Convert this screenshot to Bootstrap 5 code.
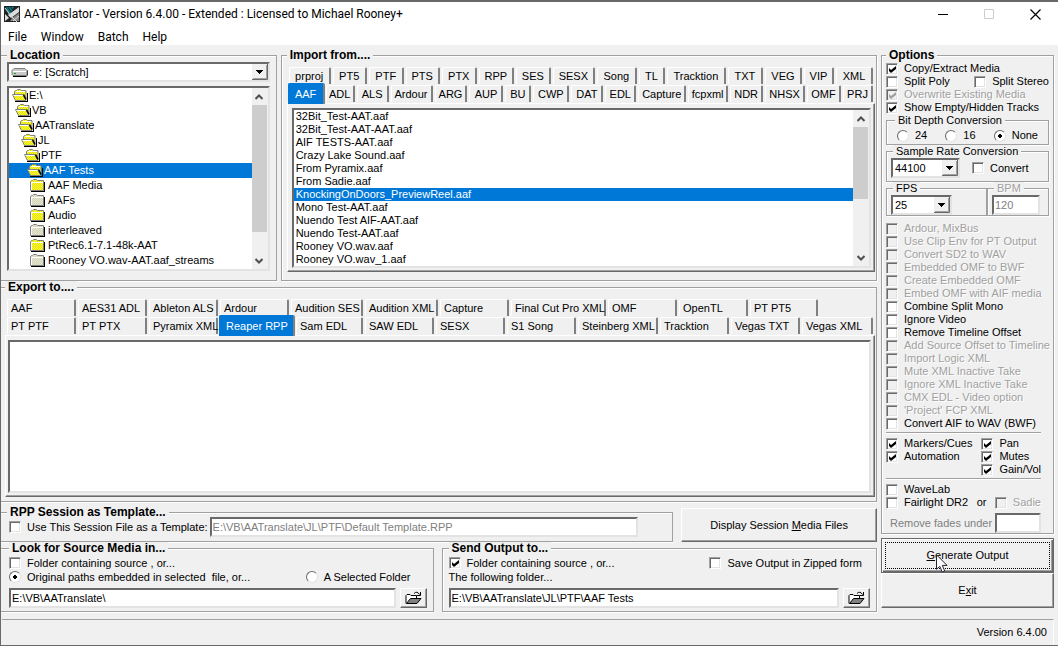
<!DOCTYPE html>
<html lang="en">
<head>
<meta charset="utf-8">
<meta name="viewport" content="width=device-width, initial-scale=1">
<title>AATranslator</title>
<link href="https://cdn.jsdelivr.net/npm/bootstrap@5.3.0/dist/css/bootstrap.min.css" rel="stylesheet">
<style>
:root{--face:#f0f0f0;--dk:#696969;--md:#a0a0a0;--lt:#e3e3e3;--sel:#0078d7}
body{min-height:100vh;background:var(--face);color:#000;font:11px/13px "Liberation Sans",Arial,sans-serif;border:1px solid var(--dk);border-width:2px 0 1px 1px;overflow:hidden}
button,input,select{font:inherit;color:inherit}
svg{display:block;flex:none}
.titlebar{height:26px;padding:0 0 2px 3px;font:12px/20px Roboto,"Open Sans",sans-serif}
.capbtn{width:46px;height:24px;border:0;background:none;display:grid;place-items:center}
.menubar{height:17px;font:12px/18px Roboto,"Open Sans",sans-serif}
.menubar .nav-link{color:#000;padding:0 7px}
.work{display:grid;grid-template-columns:minmax(0,1fr) 173px;column-gap:4px;padding-right:4px}
.toprow{display:grid;grid-template-columns:276fr 597fr;column-gap:4px;margin-top:4px}
.botrow{display:grid;grid-template-columns:433fr 436fr;column-gap:8px}
.tplrow{display:grid;grid-template-columns:673fr 196fr;column-gap:8px}
.tplrow>button{margin-top:6px}
.etched{border:1px solid var(--md);box-shadow:1px 1px 0 #fff,inset 1px 1px 0 #fff;padding:0 6px;position:relative;min-width:0}
.etched>legend{float:none;width:auto;margin:0 0 0 2px;padding:0 3px;background:var(--face);font-size:11px;line-height:13px}
.etched>legend.main{font-size:12px;font-weight:700;margin-left:0}
.openleft{border-left:0;box-shadow:0 1px 0 #fff,inset 0 1px 0 #fff}
.tabsbox{padding:0 1px 8px 5px}
.tabsbox.openleft{padding:0 1px 4px 4px}
.tabsbox .strip{padding:5px 0 0 2px}
.sunken{background:#fff;border:2px solid;border-color:var(--dk) var(--lt) var(--lt) var(--dk);border-radius:0;outline:0}
.raised{background:var(--face);border:1px solid;border-color:#fff var(--dk) var(--dk) #fff;box-shadow:inset -1px -1px 0 var(--md);border-radius:0}
.drop{appearance:none;height:20px;padding:0 18px 0 2px;line-height:16px;background:#fff url("data:image/svg+xml,%3Csvg xmlns='http://www.w3.org/2000/svg' width='16' height='16'%3E%3Cpath fill='%23f0f0f0' d='M0 0h16v16H0z'/%3E%3Cpath fill='none' stroke='%23696969' d='M0 15.500h15.500V0'/%3E%3Cpath fill='none' stroke='%23a0a0a0' d='M1 14.500h13.500V1'/%3E%3Cpath d='M4 6h7v1h-1v1H9v1H8v1H7V9H6V8H5V7H4z'/%3E%3C/svg%3E") right center no-repeat}
.rate{width:69px}.fps{width:61px}.fpsbox{width:101px}.bpm{width:62px}.fades{flex:none}
.field.bpmfield{width:48px}.field.fades{width:46px}
.tick,.dot{appearance:none;flex:none;margin:0;width:12px;height:12px}
.tick{background:#fff center no-repeat;border:1px solid;border-color:var(--md) #fff #fff var(--md);box-shadow:inset 1px 1px 0 var(--dk),inset -1px -1px 0 var(--lt)}
.tick:disabled{background-color:var(--face)}
.tick:checked{background-image:url("data:image/svg+xml,%3Csvg xmlns='http://www.w3.org/2000/svg' width='8' height='8'%3E%3Cpath d='M1 3v3l2 2 5-4V1L3 5z'/%3E%3C/svg%3E")}
.tick:checked:disabled{background-image:url("data:image/svg+xml,%3Csvg xmlns='http://www.w3.org/2000/svg' width='8' height='8'%3E%3Cpath fill='%23a0a0a0' d='M1 3v3l2 2 5-4V1L3 5z'/%3E%3C/svg%3E")}
.dot{border-radius:50%;background:#fff;border:1px solid;border-color:var(--dk) var(--lt) var(--lt) var(--dk)}
.dot:checked{background:radial-gradient(circle,#000 0 2px,#fff 2px)}
.opt{display:flex;align-items:center;height:13px;gap:6px;white-space:nowrap}
.off{color:var(--md);text-shadow:1px 1px 0 #fff}
.dim{color:#808080}
.rule{height:2px;margin:2px 8px 3px 0;border:0;border-top:1px solid var(--md);border-bottom:1px solid #fff;opacity:1}
.checks{padding-top:6px}
.botrow fieldset{padding-left:8px;padding-top:1px;padding-bottom:3px}
.botrow fieldset+fieldset{padding-left:6px}
.botrow .opt,.botrow .note{height:14px;line-height:14px}
.tplline{margin-top:-2px;padding-bottom:4px;padding-left:2px}
.field.tplfield{margin:0 28px 0 2px}
.bits{padding:2px 4px}
.raterow{padding-bottom:3px}
.tabrow{display:grid;height:18px}
.tabrow button{border:0;background:none;border-left:1px solid #fff;border-top:1px solid #fff;border-right:2px solid #808080;border-radius:2px 2px 0 0;padding:0;margin:0 2px 1px 0;line-height:15px;white-space:nowrap;min-width:0}
.tabrow button.active{background:var(--sel);color:#fff;border-color:var(--sel) #808080 var(--sel) var(--sel);margin:-2px 1px -1px -1px;z-index:1}
.imp1{grid-template-columns:44fr 36fr 37fr 36fr 37fr 37fr 37fr 44fr 42fr 28fr 61fr 37fr 39fr 32fr 39fr}
.imp2{grid-template-columns:37fr 31fr 34fr 44fr 35fr 36fr 28fr 38fr 34fr 33fr 50fr 42fr 35fr 42fr 36fr 32fr}
.exp1{grid-template-columns:71fr 71fr 71fr 71fr 74fr 75fr 71fr 97fr 71fr 71fr 70fr 55fr}
.exp2{grid-template-columns:71fr 71fr 71fr 76fr 69fr 71fr 71fr 71fr 82fr 71fr 71fr 73fr}
.exp1 button,.exp2 button{text-align:left;padding-left:3px}
.exp2 button.active{padding-left:6px}
.page{border:1px solid;border-color:#fff var(--dk) var(--dk) #fff;box-shadow:inset -1px -1px 0 var(--md);padding:4px 3px 3px 4px}
.export .page{padding-left:2px}
.pick{list-style:none;margin:0;padding:0;flex:1;min-width:0;overflow:hidden}
.pick li{white-space:nowrap}
.pick .chosen{background:var(--sel);color:#fff}
.files li{height:13px;line-height:13px;padding-left:2px}
.tree{height:181px}
.tree li{height:15px;line-height:15px;display:flex;align-items:center;gap:1px}
.d0{padding-left:3px}.d1{padding-left:6px}.d2{padding-left:9px}.d3{padding-left:12px}.d4{padding-left:15px}.d5{padding-left:18px}.d6{padding-left:21px}
.tree .d6{gap:3px}
.sbar{width:16px;display:flex;flex-direction:column;background:var(--face);padding-right:1px}
.sbar button{height:17px;border:0;padding:0;background:none;display:grid;place-items:center}
.thumb{background:#cdcdcd}
.field{height:20px;padding:0 1px;width:100%;min-width:0;line-height:16px}
.big{padding:0;text-align:center}
.default{border:1px solid var(--dk);box-shadow:inset 1px 1px 0 #fff,inset -1px -1px 0 var(--dk),inset -2px -2px 0 var(--md);position:relative}
.action{height:35px}
.default .focusbox{position:absolute;inset:3px;border:1px dotted #000}
.pointer{position:absolute;left:54px;top:15px}
.statusbar{height:26px;margin:7px 4px 0 1px;padding-right:6px;border-top:1px solid var(--md);border-right:1px solid #fff}
</style>
</head>
<body class="d-flex flex-column">
<svg width="0" height="0" class="position-absolute">
<defs>
<pattern id="dither" width="2" height="2" patternUnits="userSpaceOnUse"><path fill="#ff0" d="M0 0h2v2H0z"/><path fill="#e0dc40" d="M1 0h1v1H1zM0 1h1v1H0z"/></pattern>
<pattern id="ditherg" width="2" height="2" patternUnits="userSpaceOnUse"><path fill="#e8e8b8" d="M0 0h2v2H0z"/><path fill="#d0d0d0" d="M1 0h1v1H1zM0 1h1v1H0z"/></pattern>
<symbol id="fopen" viewBox="0 0 16 13"><path d="M3 12h12V4h1v9H3z"/><path fill="url(#dither)" stroke="#808080" d="M2.500 5V2.500l1-1h1l1-1h3l1 1h4.500v9"/><path fill="url(#dither)" stroke="#808080" d="M.5 5.500h10l3.500 6H3.500z"/><path fill="none" stroke="#fff" d="M1.500 6.500h9M4 2.500h9"/><path fill="none" stroke="#000" stroke-width="1.500" d="M11.500 5.500l2.500 5"/></symbol>
<symbol id="fclosed" viewBox="0 0 15 13"><path d="M1 12h13V3h1v10H1z"/><path fill="url(#dither)" stroke="#808080" d="M.5 11.500v-9l1-1h1l1-1h3l1 1h6v10z"/><path fill="none" stroke="#fff" d="M1.500 11V3.500H13"/></symbol>
<symbol id="fgray" viewBox="0 0 15 13"><path d="M1 12h13V3h1v10H1z"/><path fill="url(#ditherg)" stroke="#808080" d="M.5 11.500v-9l1-1h1l1-1h3l1 1h6v10z"/><path fill="none" stroke="#fff" d="M1.500 11V3.500H13"/></symbol>
<symbol id="up" viewBox="0 0 8 6"><path fill="none" stroke="#505050" stroke-width="2" d="M.5 5L4 1.500 7.500 5"/></symbol>
<symbol id="down" viewBox="0 0 8 6"><path fill="none" stroke="#505050" stroke-width="2" d="M.5 1L4 4.500 7.500 1"/></symbol>
<symbol id="browse" viewBox="0 0 17 14"><path fill="#fff" stroke="#000" d="M1 12.500V4.500l1-1h3l1 1h5.500v3"/><path fill="#808080" stroke="#000" d="M1.500 12.500l4-5h10.500l-4 5z"/><path fill="none" stroke="#000" d="M9 2.500q3-3 5.500 1M15.500 1v3.500H12"/></symbol>
</defs>
</svg>

<header class="bg-white">
  <div class="titlebar d-flex justify-content-between">
    <div class="d-flex align-items-center gap-1">
      <svg width="16" height="16" viewBox="0 0 16 16"><path fill="#222" d="M0 0h16v16H0z"/><path fill="#0c8080" d="M2 1h8L5 10z"/><path stroke="#123" d="M3 0l5 7M6 0l4 6"/><path fill="#ddd" d="M15 1v5L7 12 4 9zM1 8l4 4-4 3z"/><path fill="#888" d="M8 12l7-5v8H6z"/><path fill="none" stroke="#ddd" d="M9 15l6-5M1 2l6 8 6 6"/></svg>
      <span>AATranslator - Version 6.4.00 - Extended : Licensed to Michael Rooney+</span>
    </div>
    <div class="d-flex">
      <button class="capbtn" aria-label="Minimize"><svg width="11" height="11"><path stroke="#000" d="M0 5.500h10"/></svg></button>
      <button class="capbtn" aria-label="Maximize" disabled><svg width="11" height="11"><path fill="none" stroke="#ccc" d="M.5.5h9v9h-9z"/></svg></button>
      <button class="capbtn" aria-label="Close"><svg width="11" height="11"><path stroke="#000" stroke-width="1.200" d="M.5.5l10 10M10.500.5l-10 10"/></svg></button>
    </div>
  </div>
  <nav class="menubar nav">
    <a class="nav-link" href="#">File</a><a class="nav-link" href="#">Window</a><a class="nav-link" href="#">Batch</a><a class="nav-link" href="#">Help</a>
  </nav>
</header>

<main class="work flex-grow-1">
  <div class="d-flex flex-column">
    <div class="toprow">
      <fieldset class="etched openleft pb-2"><legend class="main">Location</legend>
        <div class="position-relative mb-1">
          <select class="drop sunken w-100 ps-4" aria-label="Drive"><option>e: [Scratch]</option></select>
          <svg class="position-absolute top-0 start-0 ms-1 mt-1" width="17" height="12" viewBox="0 0 17 12"><path d="M2 10h13l1-1V4l1 1v4l-2 2H2z"/><path fill="#c8c8c8" stroke="#808080" d="M1 8.500v-4l2-2h11l2 2v4l-1 1H2z"/><path stroke="#fff" d="M2 5.500h13"/><path stroke="#0a0" d="M3 7.500h2"/></svg>
        </div>
        <div class="sunken d-flex">
          <ul class="pick tree">
            <li class="d0"><svg width="16" height="13"><use href="#fopen"/></svg>E:\</li>
            <li class="d1"><svg width="16" height="13"><use href="#fopen"/></svg>VB</li>
            <li class="d2"><svg width="16" height="13"><use href="#fopen"/></svg>AATranslate</li>
            <li class="d3"><svg width="16" height="13"><use href="#fopen"/></svg>JL</li>
            <li class="d4"><svg width="16" height="13"><use href="#fopen"/></svg>PTF</li>
            <li class="d5 chosen"><svg width="16" height="13"><use href="#fopen"/></svg>AAF Tests</li>
            <li class="d6"><svg width="15" height="13"><use href="#fclosed"/></svg>AAF Media</li>
            <li class="d6"><svg width="15" height="13"><use href="#fgray"/></svg>AAFs</li>
            <li class="d6"><svg width="15" height="13"><use href="#fclosed"/></svg>Audio</li>
            <li class="d6"><svg width="15" height="13"><use href="#fgray"/></svg>interleaved</li>
            <li class="d6"><svg width="15" height="13"><use href="#fclosed"/></svg>PtRec6.1-7.1-48k-AAT</li>
            <li class="d6"><svg width="15" height="13"><use href="#fgray"/></svg>Rooney VO.wav-AAT.aaf_streams</li>
            <li class="d6"><svg width="15" height="13"><use href="#fgray"/></svg></li>
          </ul>
          <div class="sbar"><button aria-label="Scroll up"><svg width="8" height="6"><use href="#up"/></svg></button><div class="thumb" style="height:127px"></div><button class="mt-auto" aria-label="Scroll down"><svg width="8" height="6"><use href="#down"/></svg></button></div>
        </div>
      </fieldset>

      <fieldset class="etched tabsbox"><legend class="main">Import from....</legend>
        <div class="strip">
          <div class="tabrow imp1"><button>prproj</button><button>PT5</button><button>PTF</button><button>PTS</button><button>PTX</button><button>RPP</button><button>SES</button><button>SESX</button><button>Song</button><button>TL</button><button>Tracktion</button><button>TXT</button><button>VEG</button><button>VIP</button><button>XML</button></div>
          <div class="tabrow imp2"><button class="active">AAF</button><button>ADL</button><button>ALS</button><button>Ardour</button><button>ARG</button><button>AUP</button><button>BU</button><button>CWP</button><button>DAT</button><button>EDL</button><button>Capture</button><button>fcpxml</button><button>NDR</button><button>NHSX</button><button>OMF</button><button>PRJ</button></div>
        </div>
        <div class="page">
          <div class="sunken d-flex">
            <ul class="pick files">
              <li>32Bit_Test-AAT.aaf</li><li>32Bit_Test-AAT-AAT.aaf</li><li>AIF TESTS-AAT.aaf</li><li>Crazy Lake Sound.aaf</li><li>From Pyramix.aaf</li><li>From Sadie.aaf</li><li class="chosen">KnockingOnDoors_PreviewReel.aaf</li><li>Mono Test-AAT.aaf</li><li>Nuendo Test AIF-AAT.aaf</li><li>Nuendo Test-AAT.aaf</li><li>Rooney VO.wav.aaf</li><li>Rooney VO.wav_1.aaf</li>
            </ul>
            <div class="sbar"><button aria-label="Scroll up"><svg width="8" height="6"><use href="#up"/></svg></button><div class="thumb" style="height:72px"></div><button class="mt-auto" aria-label="Scroll down"><svg width="8" height="6"><use href="#down"/></svg></button></div>
          </div>
        </div>
      </fieldset>
    </div>

    <fieldset class="etched openleft tabsbox export d-flex flex-column flex-grow-1"><legend class="main">Export to....</legend>
      <div class="h-100 d-flex flex-column">
      <div class="strip">
        <div class="tabrow exp1"><button>AAF</button><button>AES31 ADL</button><button>Ableton ALS</button><button>Ardour</button><button>Audition SES</button><button>Audition XML</button><button>Capture</button><button>Final Cut Pro XML</button><button>OMF</button><button>OpenTL</button><button>PT PT5</button></div>
        <div class="tabrow exp2"><button>PT PTF</button><button>PT PTX</button><button>Pyramix XML</button><button class="active">Reaper RPP</button><button>Sam EDL</button><button>SAW EDL</button><button>SESX</button><button>S1 Song</button><button>Steinberg XML</button><button>Tracktion</button><button>Vegas TXT</button><button>Vegas XML</button></div>
      </div>
      <div class="page flex-grow-1 d-flex"><div class="sunken flex-grow-1"></div></div>
      </div>
    </fieldset>

    <div class="tplrow">
      <fieldset class="etched openleft mt-1"><legend class="main">RPP Session as Template...</legend>
        <div class="tplline d-flex align-items-center">
          <label class="opt"><input type="checkbox" class="tick">Use This Session File as a Template:</label>
          <input class="sunken field tplfield dim" aria-label="Template" value="E:\VB\AATranslate\JL\PTF\Default Template.RPP">
        </div>
      </fieldset>
      <button class="raised big">Display Session <u>M</u>edia Files</button>
    </div>

    <div class="botrow">
      <fieldset class="etched openleft"><legend class="main">Look for Source Media in...</legend>
        <label class="opt"><input type="checkbox" class="tick">Folder containing source , or...</label>
        <div class="d-flex justify-content-between pe-3">
          <label class="opt"><input type="radio" name="src" class="dot" checked>Original paths embedded in selected&nbsp; file, or...</label>
          <label class="opt"><input type="radio" name="src" class="dot">A Selected Folder</label>
        </div>
        <div class="d-flex gap-1 mt-1"><input class="sunken field" aria-label="Source folder" value="E:\VB\AATranslate\"><button class="raised px-1" aria-label="Browse source folder"><svg width="17" height="14"><use href="#browse"/></svg></button></div>
      </fieldset>
      <fieldset class="etched"><legend class="main">Send Output to...</legend>
        <div class="d-flex justify-content-between pe-2">
          <label class="opt"><input type="checkbox" class="tick" checked>Folder containing source , or...</label>
          <label class="opt"><input type="checkbox" class="tick">Save Output in Zipped form</label>
        </div>
        <div class="note">The following folder...</div>
        <div class="d-flex gap-1 mt-1"><input class="sunken field" aria-label="Output folder" value="E:\VB\AATranslate\JL\PTF\AAF Tests"><button class="raised px-1" aria-label="Browse output folder"><svg width="17" height="14"><use href="#browse"/></svg></button></div>
      </fieldset>
    </div>
  </div>

  <aside class="d-flex flex-column">
    <fieldset class="etched px-1 mt-1"><legend class="main">Options</legend>
      <label class="opt"><input type="checkbox" class="tick" checked>Copy/Extract Media</label>
      <div class="d-flex justify-content-between"><label class="opt"><input type="checkbox" class="tick">Split Poly</label><label class="opt"><input type="checkbox" class="tick">Split Stereo</label></div>
      <label class="opt off"><input type="checkbox" class="tick" checked disabled>Overwrite Existing Media</label>
      <label class="opt"><input type="checkbox" class="tick" checked>Show Empty/Hidden Tracks</label>
      <fieldset class="etched"><legend>Bit Depth Conversion</legend>
        <div class="bits d-flex justify-content-between"><label class="opt"><input type="radio" name="bits" class="dot">24</label><label class="opt"><input type="radio" name="bits" class="dot">16</label><label class="opt"><input type="radio" name="bits" class="dot" checked>None</label></div>
      </fieldset>
      <fieldset class="etched ps-1"><legend>Sample Rate Conversion</legend>
        <div class="raterow d-flex align-items-center"><select class="drop sunken rate" aria-label="Sample rate"><option>44100</option></select><label class="opt ms-2 ps-1"><input type="checkbox" class="tick">Convert</label></div>
      </fieldset>
      <div class="d-flex justify-content-between">
        <fieldset class="etched ps-1 fpsbox"><legend>FPS</legend><select class="drop sunken fps d-block" aria-label="FPS"><option>25</option></select></fieldset>
        <fieldset class="etched px-1 bpm"><legend class="off">BPM</legend><input class="sunken field bpmfield dim d-block" aria-label="BPM" value="120"></fieldset>
      </div>
      <div class="checks">
      <label class="opt off"><input type="checkbox" class="tick" disabled>Ardour, MixBus</label>
      <label class="opt off"><input type="checkbox" class="tick" disabled>Use Clip Env for PT Output</label>
      <label class="opt off"><input type="checkbox" class="tick" disabled>Convert SD2 to WAV</label>
      <label class="opt off"><input type="checkbox" class="tick" disabled>Embedded OMF to BWF</label>
      <label class="opt off"><input type="checkbox" class="tick" disabled>Create Embedded OMF</label>
      <label class="opt off"><input type="checkbox" class="tick" disabled>Embed OMF with AIF media</label>
      <label class="opt"><input type="checkbox" class="tick">Combine Split Mono</label>
      <label class="opt"><input type="checkbox" class="tick">Ignore Video</label>
      <label class="opt"><input type="checkbox" class="tick">Remove Timeline Offset</label>
      <label class="opt off"><input type="checkbox" class="tick" disabled>Add Source Offset to Timeline</label>
      <label class="opt off"><input type="checkbox" class="tick" disabled>Import Logic XML</label>
      <label class="opt off"><input type="checkbox" class="tick" disabled>Mute XML Inactive Take</label>
      <label class="opt off"><input type="checkbox" class="tick" disabled>Ignore XML Inactive Take</label>
      <label class="opt off"><input type="checkbox" class="tick" disabled>CMX EDL - Video option</label>
      <label class="opt off"><input type="checkbox" class="tick" disabled>'Project' FCP XML</label>
      <label class="opt"><input type="checkbox" class="tick">Convert AIF to WAV (BWF)</label>
      </div>
      <hr class="rule">
      <div class="d-flex">
        <div class="flex-grow-1"><label class="opt"><input type="checkbox" class="tick" checked>Markers/Cues</label><label class="opt"><input type="checkbox" class="tick" checked>Automation</label></div>
        <div class="pe-2"><label class="opt"><input type="checkbox" class="tick" checked>Pan</label><label class="opt"><input type="checkbox" class="tick" checked>Mutes</label><label class="opt"><input type="checkbox" class="tick" checked>Gain/Vol</label></div>
      </div>
      <hr class="rule">
      <label class="opt"><input type="checkbox" class="tick">WaveLab</label>
      <div class="d-flex justify-content-between pe-2"><label class="opt"><input type="checkbox" class="tick">Fairlight DR2</label><span>or</span><label class="opt off"><input type="checkbox" class="tick" disabled>Sadie</label></div>
      <div class="d-flex align-items-center justify-content-between ps-1 pe-2 pt-1"><label for="fades" class="dim text-nowrap">Remove fades under</label><input id="fades" class="sunken field fades"></div>
    </fieldset>
    <button class="raised big default action mt-1"><u>G</u>enerate Output<span class="focusbox"></span>
      <svg class="pointer" width="13" height="20" viewBox="0 0 13 20"><path fill="#fff" stroke="#223" d="M.5.8v14.500l3.300-3 2.400 5.700 2.500-1-2.400-5.600h4.700z"/></svg>
    </button>
    <button class="raised big action">E<u>x</u>it</button>
  </aside>
</main>

<footer class="statusbar d-flex align-items-center justify-content-end">Version 6.4.00</footer>
<script src="https://cdn.jsdelivr.net/npm/bootstrap@5.3.0/dist/js/bootstrap.bundle.min.js"></script>
</body>
</html>
